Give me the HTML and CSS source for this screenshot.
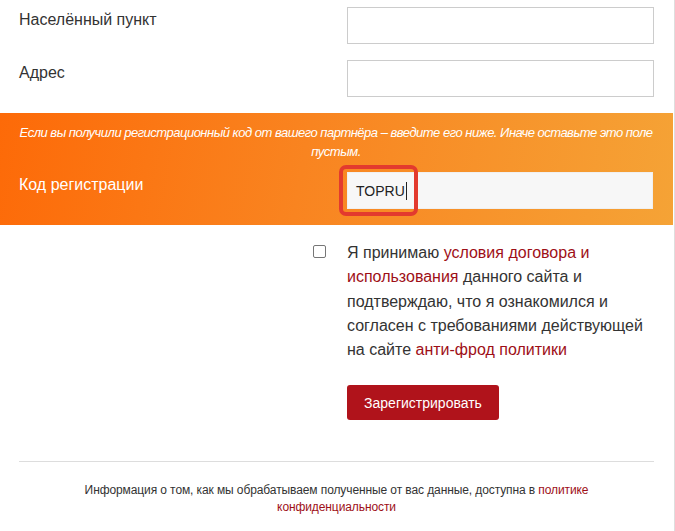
FILE: index.html
```html
<!DOCTYPE html>
<html lang="ru">
<head>
<meta charset="utf-8">
<link rel="stylesheet" href="styles.css">
</head>
<body>
<div class="page">
  <div class="section">
    <div class="row">
      <label class="label">Населённый пункт</label>
      <input class="field" type="text">
    </div>
    <div class="row">
      <label class="label">Адрес</label>
      <input class="field" type="text">
    </div>
  </div>

  <div class="band">
    <p class="note">Если вы получили регистрационный код от вашего партнёра – введите его ниже. Иначе оставьте это поле пустым.</p>
    <div class="row">
      <label class="label light">Код регистрации</label>
      <div class="code-wrap">
        <div class="field code">TOPRU<span class="caret"></span></div>
        <span class="highlight"></span>
      </div>
    </div>
  </div>

  <div class="section agree-section">
    <div class="row agree">
      <div class="check-cell"><span class="checkbox"></span></div>
      <p class="agree-text">Я принимаю <a href="#">условия договора и использования</a> данного сайта и подтверждаю, что я ознакомился и согласен с требованиями действующей на сайте <a href="#">анти-фрод политики</a></p>
    </div>
    <div class="row btn-row">
      <div></div>
      <div><button class="btn" type="button">Зарегистрировать</button></div>
    </div>
    <hr class="divider">
    <p class="footer">Информация о том, как мы обрабатываем полученные от вас данные, доступна в <a href="#">политике конфиденциальности</a></p>
  </div>
</div>
</body>
</html>
```

FILE: styles.css
```css
* { box-sizing: border-box; }
html, body { margin: 0; padding: 0; background: #fff; }
body {
  font-family: "Liberation Sans", Arial, sans-serif;
  color: #333;
  width: 675px;
  height: 531px;
  overflow: hidden;
}
.page {
  width: 675px;
  min-height: 531px;
  border-right: 1px solid #dedede;
}
.section {
  padding: 7px 20px 0 19px;
}
.row {
  display: grid;
  grid-template-columns: 328px 1fr;
  margin-bottom: 16px;
}
.label {
  font-size: 16px;
  line-height: 20px;
  padding-top: 3px;
  color: #333;
}
.label.light { color: #fff; }
.field {
  display: block;
  width: 100%;
  height: 37px;
  border: 1px solid #ccc;
  background: #fff;
  margin: 0;
  padding: 0 10px;
  font: 14px "Liberation Sans", Arial, sans-serif;
}
.band {
  background: linear-gradient(100deg, #fd6a08 0%, #f98420 45%, #f5a336 100%);
  padding: 10px 20px 0 19px;
  height: 112px;
  margin-right: 1px;
}
.band .row { margin-bottom: 0; }
.note {
  margin: 0 -2px 11px;
  color: #fff;
  font-style: italic;
  font-size: 13px;
  line-height: 19px;
  letter-spacing: -0.5px;
  text-align: center;
}
.code-wrap { position: relative; }
.field.code {
  background: #f7f7f7;
  border-color: #f0f0f0;
  display: flex;
  align-items: center;
  padding-left: 8px;
  font-size: 14px;
  color: #222;
}
.caret {
  display: inline-block;
  width: 1px;
  height: 18px;
  background: #222;
  margin-left: 1px;
}
.highlight {
  position: absolute;
  left: -8px;
  top: -7px;
  width: 79px;
  height: 51px;
  border: 4px solid #e33a2e;
  border-radius: 7px;
}
.agree-section { padding-top: 16px; }
.agree { margin-bottom: 23px; }
.check-cell {
  display: flex;
  justify-content: flex-end;
  padding-right: 21px;
  padding-top: 4px;
}
.checkbox {
  width: 13px;
  height: 13px;
  border: 1px solid #767676;
  border-radius: 2px;
  background: #fff;
}
.agree-text {
  margin: 0;
  font-size: 16px;
  line-height: 24.25px;
  color: #333;
  padding-right: 8px;
}
a { color: #9e0f17; text-decoration: none; }
.btn-row { margin-bottom: 0; }
.btn {
  display: block;
  background: #b0131b;
  color: #fff;
  border: 0;
  border-radius: 3px;
  height: 35px;
  width: 152px;
  padding: 0;
  font: 14px "Liberation Sans", Arial, sans-serif;
}
.divider {
  border: 0;
  border-top: 1px solid #ddd;
  margin: 41px 0 0;
}
.footer {
  margin: 20px 0 0;
  padding: 0 58px;
  text-align: center;
  font-size: 12px;
  line-height: 17px;
  letter-spacing: -0.1px;
  color: #333;
}
```
